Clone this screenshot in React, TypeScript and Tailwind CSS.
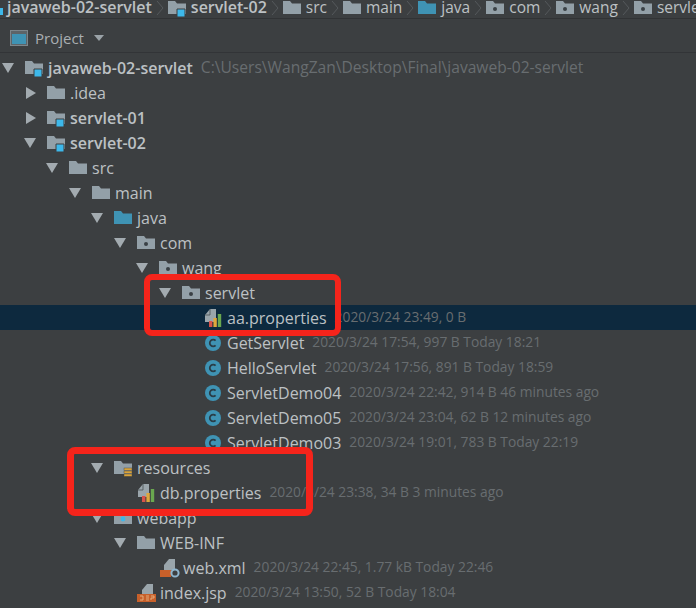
const font = "font-['Open_Sans','Noto_Sans',sans-serif]";

function Folder({ kind = "plain", size = 18 }: { kind?: string; size?: number }) {
  const fill = kind === "java" ? "#3f93b4" : "#93a0a8";
  return (
    <svg width={size} height={size} viewBox="0 0 18 18" className="shrink-0">
      <path d="M0 2h7l2 2.5h9V15H0z" fill={fill} />
      {kind === "module" && <path d="M9 10h8v8H9z" fill="#3db8ea" stroke="#3c3f41" strokeWidth="1" />}
      {kind === "package" && <circle cx="9" cy="10" r="2" fill="#3a4045" />}
      {kind === "web" && <circle cx="9" cy="10" r="2.4" fill="#3db8ea" />}
      {kind === "res" && (
        <g fill="#d9a43b" stroke="#3c3f41" strokeWidth="0.4">
          <rect x="10" y="9" width="8" height="2.4" />
          <rect x="10" y="12" width="8" height="2.4" />
          <rect x="10" y="15" width="8" height="2.4" />
        </g>
      )}
    </svg>
  );
}

function FileIcon({ kind }: { kind: string }) {
  if (kind === "class") {
    return (
      <svg width="18" height="18" viewBox="0 0 18 18" className="shrink-0">
        <circle cx="9" cy="9" r="8" fill="#3f93b4" />
        <path d="M11.6 6.6a3.4 3.4 0 1 0 0 4.8" fill="none" stroke="#2a3d47" strokeWidth="1.8" />
      </svg>
    );
  }
  if (kind === "props") {
    return (
      <svg width="18" height="20" viewBox="0 0 18 20" className="shrink-0">
        <path d="M1 7l5-6h6v13H1z" fill="#9aa5ab" />
        <path d="M6 1v6H1" fill="none" stroke="#4a5053" strokeWidth="0.8" />
        <rect x="5" y="13" width="3.4" height="6" fill="#d9534a" />
        <rect x="9.4" y="10" width="3.4" height="9" fill="#e0a73c" />
        <rect x="13.8" y="6" width="3.4" height="13" fill="#6aa84f" />
      </svg>
    );
  }
  if (kind === "xml") {
    return (
      <svg width="20" height="20" viewBox="0 0 20 20" className="shrink-0">
        <path d="M4 7l5-6h6v11H4z" fill="#9aa5ab" />
        <rect x="0" y="12" width="11" height="7" fill="#c8602a" />
        <circle cx="15" cy="15" r="3.6" fill="none" stroke="#8fb6cf" strokeWidth="2" />
      </svg>
    );
  }
  return (
    <svg width="20" height="20" viewBox="0 0 20 20" className="shrink-0">
      <path d="M5 7l5-6h6v11H5z" fill="#9aa5ab" />
      <rect x="0" y="11" width="19" height="8" fill="#c8602a" />
      <path d="M3 13h3v4H3M9 13h3M9 15h3M9 17h3M14 13h3v2h-3v2" fill="none" stroke="#e8b483" strokeWidth="0.9" />
    </svg>
  );
}

const rows = [
  { x: 2, open: true, folder: "module", name: "javaweb-02-servlet", bold: true, note: "C:\\Users\\WangZan\\Desktop\\Final\\javaweb-02-servlet", path: true },
  { x: 24, open: false, folder: "plain", name: ".idea" },
  { x: 24, open: false, folder: "module", name: "servlet-01", bold: true },
  { x: 24, open: true, folder: "module", name: "servlet-02", bold: true },
  { x: 46, open: true, folder: "plain", name: "src" },
  { x: 69, open: true, folder: "plain", name: "main" },
  { x: 91, open: true, folder: "java", name: "java" },
  { x: 114, open: true, folder: "package", name: "com" },
  { x: 136, open: true, folder: "package", name: "wang" },
  { x: 159, open: true, folder: "package", name: "servlet" },
  { x: 180, leaf: true, file: "props", name: "aa.properties", note: "2020/3/24 23:49, 0 B", selected: true },
  { x: 180, leaf: true, file: "class", name: "GetServlet", note: "2020/3/24 17:54, 997 B Today 18:21" },
  { x: 180, leaf: true, file: "class", name: "HelloServlet", note: "2020/3/24 17:56, 891 B Today 18:59" },
  { x: 180, leaf: true, file: "class", name: "ServletDemo04", note: "2020/3/24 22:42, 914 B 46 minutes ago" },
  { x: 180, leaf: true, file: "class", name: "ServletDemo05", note: "2020/3/24 23:04, 62 B 12 minutes ago" },
  { x: 180, leaf: true, file: "class", name: "ServletDemo03", note: "2020/3/24 19:01, 783 B Today 22:19" },
  { x: 91, open: true, folder: "res", name: "resources" },
  { x: 113, leaf: true, file: "props", name: "db.properties", note: "2020/3/24 23:38, 34 B 3 minutes ago" },
  { x: 91, open: true, folder: "web", name: "webapp" },
  { x: 114, open: true, folder: "plain", name: "WEB-INF" },
  { x: 136, leaf: true, file: "xml", name: "web.xml", note: "2020/3/24 22:45, 1.77 kB Today 22:46" },
  { x: 113, leaf: true, file: "jsp", name: "index.jsp", note: "2020/3/24 13:50, 52 B Today 18:04" },
];

const crumbs = [
  { name: "javaweb-02-servlet", bold: true },
  { name: "servlet-02", bold: true, folder: "module" },
  { name: "src", folder: "plain" },
  { name: "main", folder: "plain" },
  { name: "java", folder: "java" },
  { name: "com", folder: "package" },
  { name: "wang", folder: "package" },
  { name: "servlet", folder: "package" },
];

export default function App() {
  return (
    <div className={`relative h-[608px] w-[696px] overflow-hidden bg-[#3c3f41] text-[#bcc1c4] ${font}`}>
      {/* Breadcrumb */}
      <div className="flex h-[19px] items-center border-b border-[#313335] pb-[3px] text-[16px] leading-[15px] whitespace-nowrap">
        <span className="mr-[4px] h-[7px] w-[3px] shrink-0 self-end bg-[#3db8ea]" />
        {crumbs.map((c, i) => (
          <div key={c.name} className="flex h-[15px] shrink-0 items-center">
            {c.folder && <Folder kind={c.folder} size={18} />}
            <span className={c.folder ? "ml-[5px]" : ""}>
              <span className={c.bold ? "font-semibold" : "text-[15.5px]"}>{c.name}</span>
            </span>
            {i < crumbs.length - 1 && (
              <svg width="14" height="16" viewBox="0 0 14 16" className="mr-[1px] ml-[1px]">
                <path d="M4 1l6 7-6 7" fill="none" stroke="#55595c" strokeWidth="1" />
              </svg>
            )}
          </div>
        ))}
      </div>

      {/* Project header */}
      <div className="flex h-[34px] items-center border-b border-[#323437] pt-[5px] pl-[10px] text-[15px] text-[#a9aeb1]">
        <svg width="18" height="16" viewBox="0 0 18 16">
          <rect x="0.5" y="0.5" width="17" height="15" fill="#5d6468" stroke="#7d868b" />
          <rect x="2" y="4" width="14" height="10" fill="#3f93b4" />
        </svg>
        <span className="ml-[7px]">Project</span>
        <svg width="10" height="6" viewBox="0 0 10 6" className="ml-[10px]">
          <path d="M0 0h10L5 6z" fill="#9aa2a7" />
        </svg>
      </div>

      {/* Tree */}
      <div className="pt-[2px] text-[16px]">
        {rows.map((r) => (
          <div
            key={r.name}
            className={`flex h-[25px] items-center whitespace-nowrap ${r.selected ? "bg-[#0d293e]" : ""}`}
            style={{ paddingLeft: r.x }}
          >
            {r.leaf ? (
              <span className="w-[24px] shrink-0" />
            ) : (
              <span className="flex w-[23px] shrink-0 justify-start">
                {r.open ? (
                  <svg width="12" height="10" viewBox="0 0 12 10">
                    <path d="M0 0h12L6 10z" fill="#a3abb0" />
                  </svg>
                ) : (
                  <svg width="10" height="12" viewBox="0 0 10 12" className="ml-[2px]">
                    <path d="M0 0l10 6-10 6z" fill="#a3abb0" />
                  </svg>
                )}
              </span>
            )}
            {r.file ? <FileIcon kind={r.file} /> : <Folder kind={r.folder} />}
            <span className={`leading-none ${r.file === "xml" || r.file === "jsp" ? "ml-[3px]" : "ml-[5px]"} ${r.bold ? "font-semibold" : ""}`}>
              {r.name}
            </span>
            {r.note && (
              <span className={`ml-[8px] text-[#686d70] ${r.path ? "text-[15.6px]" : "text-[13.8px]"}`}>{r.note}</span>
            )}
          </div>
        ))}
      </div>

      {/* Red annotations drawn over the screenshot */}
      <div className="absolute top-[274px] left-[144px] h-[62px] w-[197px] rounded-[8px] border-[6px] border-[#f5241b]" />
      <div className="absolute top-[447px] left-[67px] h-[69px] w-[246px] rounded-[8px] border-[7px] border-[#f5241b]" />
    </div>
  );
}
